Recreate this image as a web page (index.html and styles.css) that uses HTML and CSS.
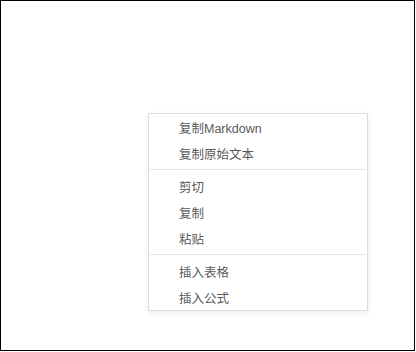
FILE: index.html
```html
<!DOCTYPE html>
<html lang="zh-CN">
<head>
    <meta charset="UTF-8">
    <meta name="viewport" content="width=device-width, initial-scale=1.0">
    <title>右键菜单</title>
    <link rel="stylesheet" href="styles.css">
</head>
<body>
    <div class="editor">
        <ul class="context-menu">
            <li class="menu-item">复制Markdown</li>
            <li class="menu-item">复制原始文本</li>
            <li class="menu-divider"></li>
            <li class="menu-item">剪切</li>
            <li class="menu-item">复制</li>
            <li class="menu-item">粘贴</li>
            <li class="menu-divider"></li>
            <li class="menu-item">插入表格</li>
            <li class="menu-item">插入公式</li>
        </ul>
    </div>
</body>
</html>
```

FILE: styles.css
```css
body {
    margin: 0;
    background: #fff;
    font-family: "Liberation Sans", "Noto Sans CJK SC", sans-serif;
}
.editor {
    position: relative;
    box-sizing: border-box;
    width: 415px;
    height: 351px;
    border: 1px solid #000;
    background: #fff;
}
.context-menu {
    position: absolute;
    left: 147px;
    top: 112px;
    width: 218px;
    height: 195px;
    margin: 0;
    padding: 1px 0 0;
    list-style: none;
    overflow: hidden;
    background: #fff;
    border: 1px solid #ddd;
    box-shadow: 0 2px 6px rgba(0,0,0,0.08);
}
.menu-item {
    height: 26px;
    line-height: 26px;
    padding: 1px 0 0 30px;
    box-sizing: border-box;
    font-size: 12.5px;
    color: #5a5a5a;
    cursor: default;
}
.menu-divider {
    height: 1px;
    margin: 2px 1px 4px;
    background: #e5e5e5;
}
```
